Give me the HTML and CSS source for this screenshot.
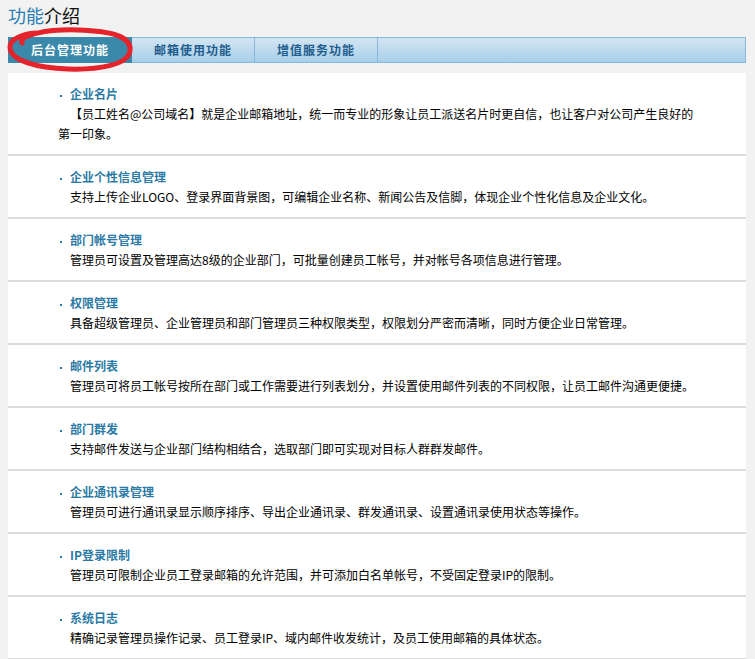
FILE: index.html
```html
<!DOCTYPE html>
<html lang="zh-CN">
<head>
  <meta charset="UTF-8" />
  <title>功能介绍</title>
  <link rel="stylesheet" href="styles.css">
</head>
<body>
  <div class="page">
    <h2 class="page-title"><span class="hl">功能</span>介绍</h2>

    <div class="tabs-wrap">
      <ul class="tabs">
        <li class="active">后台管理功能</li>
        <li>邮箱使用功能</li>
        <li>增值服务功能</li>
      </ul>
      <svg class="mark" viewBox="-4 -12 135 50" width="135" height="50">
        <path d="M14 6 C10 -2, 40 -8, 70 -7 C105 -6, 124 0, 122 14 C120 28, 90 33, 60 32 C30 31, 2 24, 2 10 C2 2, 14 -3, 28 -4" fill="none" stroke="#e5232a" stroke-width="5" stroke-linecap="round"/>
      </svg>
    </div>

    <div class="list">
      <div class="item">
        <h3><i class="dot"></i>企业名片</h3>
        <p>【员工姓名@公司域名】就是企业邮箱地址，统一而专业的形象让员工派送名片时更自信，也让客户对公司产生良好的第一印象。</p>
      </div>
      <div class="item">
        <h3><i class="dot"></i>企业个性信息管理</h3>
        <p>支持上传企业LOGO、登录界面背景图，可编辑企业名称、新闻公告及信脚，体现企业个性化信息及企业文化。</p>
      </div>
      <div class="item">
        <h3><i class="dot"></i>部门帐号管理</h3>
        <p>管理员可设置及管理高达8级的企业部门，可批量创建员工帐号，并对帐号各项信息进行管理。</p>
      </div>
      <div class="item">
        <h3><i class="dot"></i>权限管理</h3>
        <p>具备超级管理员、企业管理员和部门管理员三种权限类型，权限划分严密而清晰，同时方便企业日常管理。</p>
      </div>
      <div class="item">
        <h3><i class="dot"></i>邮件列表</h3>
        <p>管理员可将员工帐号按所在部门或工作需要进行列表划分，并设置使用邮件列表的不同权限，让员工邮件沟通更便捷。</p>
      </div>
      <div class="item">
        <h3><i class="dot"></i>部门群发</h3>
        <p>支持邮件发送与企业部门结构相结合，选取部门即可实现对目标人群群发邮件。</p>
      </div>
      <div class="item">
        <h3><i class="dot"></i>企业通讯录管理</h3>
        <p>管理员可进行通讯录显示顺序排序、导出企业通讯录、群发通讯录、设置通讯录使用状态等操作。</p>
      </div>
      <div class="item">
        <h3><i class="dot"></i>IP登录限制</h3>
        <p>管理员可限制企业员工登录邮箱的允许范围，并可添加白名单帐号，不受固定登录IP的限制。</p>
      </div>
      <div class="item">
        <h3><i class="dot"></i>系统日志</h3>
        <p>精确记录管理员操作记录、员工登录IP、域内邮件收发统计，及员工使用邮箱的具体状态。</p>
      </div>
    </div>
  </div>
</body>
</html>
```

FILE: styles.css
```css
body {
  margin: 0;
  background-color: #f2f2f2;
  font-family: "Noto Sans CJK SC", "Noto Sans", sans-serif;
  font-size: 12px;
  color: #000;
}
.page {
  padding: 0 9px 0 8px;
}
.page-title {
  margin: 0 0 7px;
  font-size: 18px;
  line-height: 30px;
  font-weight: normal;
  color: #111;
}
.page-title .hl {
  color: #2a7db5;
}
.tabs-wrap {
  position: relative;
}
.tabs {
  display: flex;
  margin: 0;
  padding: 0;
  list-style: none;
  height: 24px;
  border: 1px solid #86b9dc;
  background: linear-gradient(#d3e5f3, #a8cfe8);
}
.tabs li {
  width: 122px;
  border-right: 1px solid #86b9dc;
  text-align: center;
  line-height: 24px;
  font-weight: bold;
  letter-spacing: 1px;
  color: #1d5c8c;
}
.tabs li.active {
  background-color: #3b89aa;
  color: #fff;
  margin: -1px 0 -1px -1px;
  padding: 1px 0 1px 1px;
  border-right-color: #3b89aa;
}
.mark {
  position: absolute;
  left: -4px;
  top: -12px;
  pointer-events: none;
}
.list {
  margin-top: 10px;
}
.item {
  background-color: #fff;
  border-bottom: 2px solid #dcdcdc;
  padding: 11px 46px 10px 50px;
}
.item h3 {
  margin: 0;
  font-size: 12px;
  line-height: 20px;
  font-weight: bold;
  color: #2b7aa5;
}
.dot {
  display: inline-block;
  width: 2px;
  height: 2px;
  margin: 0 8px 0 2px;
  background-color: #2b7aa5;
  vertical-align: middle;
}
.item p {
  margin: 0;
  line-height: 20px;
  text-indent: 12px;
}
```
